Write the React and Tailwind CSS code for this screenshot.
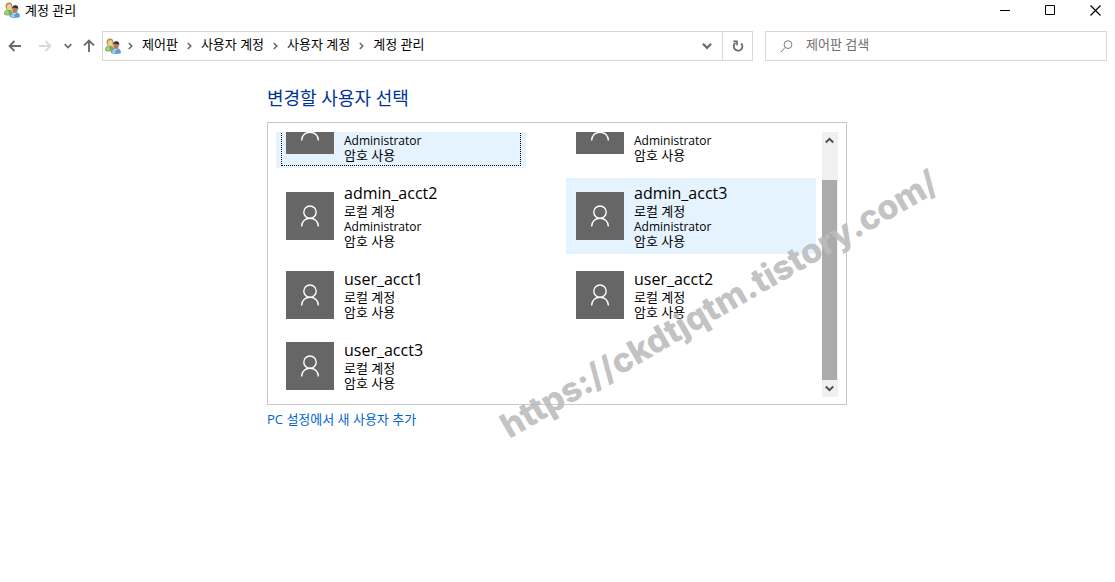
import { Fragment } from "react";

const accounts = [
  { name: "admin", admin: true, selected: true, focused: true },
  { name: "admin_acct1", admin: true },
  { name: "admin_acct2", admin: true },
  { name: "admin_acct3", admin: true, selected: true },
  { name: "user_acct1" },
  { name: "user_acct2" },
  { name: "user_acct3" },
];

const crumbs = ["제어판", "사용자 계정", "사용자 계정", "계정 관리"];

function UsersIcon() {
  return (
    <svg width="16" height="16" viewBox="0 0 16 16" className="shrink-0" aria-hidden="true">
      <path d="M0 12.5C0 9 1.6 7.4 4.6 7.2 7.5 7.4 9 9 9 12.8 6 13.8 2 13.6 0 12.5Z" fill="#7fae4c" />
      <path d="M1 11.8C1.2 9.6 2.2 8.4 4 8.2L5 12.6C3.4 12.8 2 12.5 1 11.8Z" fill="#a9cf7b" />
      <path d="M1.6 4.4C1.4 1.8 3 .5 5 .5S8.6 2 8.2 4.8L7.4 7.4H2.6Z" fill="#a87d35" />
      <ellipse cx="5.2" cy="5" rx="2.4" ry="3" fill="#f3cf9f" />
      <path d="M2.2 4.4C2.4 1.8 4 .9 5.6 1.2 5.2 2.8 4 3.8 2.2 4.4Z" fill="#d9ad58" />
      <path d="M6 15C5.8 12 7.4 10.2 10.8 10.1 14.2 10.2 16 11.8 16 15 13 16.2 8.6 16.2 6 15Z" fill="#5f9bd6" />
      <path d="M7.2 14.4C7.2 12.4 8.2 11.2 9.8 11L10.8 15.2C9.4 15.4 8 15 7.2 14.4Z" fill="#a5cdf0" />
      <path d="M9.4 10.2 11 12.6 12.8 10.2Z" fill="#eef5fb" />
      <ellipse cx="11" cy="7.8" rx="2.7" ry="3.1" fill="#b97b4b" />
      <path d="M8 7.2C7.6 4.4 9.2 3.2 11.2 3.2S14.8 4.6 14.2 7.8L13.4 6.2C11.6 6.4 9.8 6 8.8 5.6Z" fill="#33302f" />
    </svg>
  );
}

function Arrow({ className }) {
  return (
    <svg width="14" height="12" viewBox="0 0 14 12" className={className} fill="none" stroke="currentColor" strokeWidth="1.9" aria-hidden="true">
      <path d="M13 6H1.8M6.4 1 1.6 6 6.4 11" />
    </svg>
  );
}

function Chevron({ className, size = 9 }) {
  return (
    <svg width={size} height={size} viewBox="0 0 9 9" className={className} fill="none" stroke="currentColor" strokeWidth="2" aria-hidden="true">
      <path d="M.8 2.5 4.5 6.2 8.2 2.5" />
    </svg>
  );
}

function CrumbChevron() {
  return (
    <svg width="5" height="8" viewBox="0 0 5 8" className="mt-0.5 shrink-0" fill="none" stroke="#6b6b6b" strokeWidth="1.6" aria-hidden="true">
      <path d="M.8 1 3.8 4 .8 7" />
    </svg>
  );
}

function TitleBar() {
  return (
    <header className="flex h-5 items-center justify-between pl-1 pr-[14px]">
      <div className="flex items-center gap-[5px]">
        <UsersIcon />
        <h1 className="leading-5">계정 관리</h1>
      </div>
      <div className="flex gap-[34px]">
        <button type="button" aria-label="최소화">
          <svg width="11" height="11" viewBox="0 0 11 11" stroke="#000" fill="none">
            <path d="M0 5.5H10" />
          </svg>
        </button>
        <button type="button" aria-label="최대화">
          <svg width="11" height="11" viewBox="0 0 11 11" stroke="#000" fill="none">
            <path d="M.5.5H9.5V9.5H.5Z" />
          </svg>
        </button>
        <button type="button" aria-label="닫기">
          <svg width="11" height="11" viewBox="0 0 11 11" stroke="#000" strokeWidth="1.2" fill="none">
            <path d="M.5.5 10.5 10.5M10.5.5.5 10.5" />
          </svg>
        </button>
      </div>
    </header>
  );
}

function AddressBar() {
  return (
    <div className="mt-[11px] flex h-[30px] items-center pl-2 pr-2">
      {/* History buttons */}
      <nav className="flex w-[94px] shrink-0 items-center text-[#6b6b6b]" aria-label="탐색">
        <button type="button" aria-label="뒤로">
          <Arrow />
        </button>
        <button type="button" aria-label="앞으로" className="ml-4 text-[#d9d9d9]">
          <Arrow className="rotate-180" />
        </button>
        <button type="button" aria-label="최근 위치" className="ml-3">
          <Chevron size={8} />
        </button>
        <button type="button" aria-label="위로" className="ml-2.5">
          <Arrow className="rotate-90" />
        </button>
      </nav>

      {/* Breadcrumbs */}
      <div className="flex h-full min-w-0 flex-1 border border-[#d9d9d9]">
        <div className="flex min-w-0 flex-1 items-center pl-0.5 pr-2.5">
          <UsersIcon />
          <div className="flex items-center gap-[9px] pb-0.5 pl-[7px] whitespace-nowrap">
            {crumbs.map((crumb, i) => (
              <Fragment key={i}>
                <CrumbChevron />
                <a href="#">{crumb}</a>
              </Fragment>
            ))}
          </div>
          <button type="button" aria-label="이전 위치" className="ml-auto text-[#6b6b6b]">
            <Chevron size={10} />
          </button>
        </div>
        <button type="button" aria-label="새로 고침" className="flex w-[30px] items-center justify-center border-l border-[#d9d9d9]">
          <svg width="12" height="12" viewBox="0 0 12 12" fill="none" stroke="#6b6b6b" strokeWidth="1.8">
            <path d="M9.2 3.4A4.3 4.3 0 1 1 3.4 3" />
            <path d="M1.4 1.4H5V5.2" strokeWidth="1.7" />
          </svg>
        </button>
      </div>

      {/* Search */}
      <label className="ml-3 flex h-full w-[342px] shrink-0 items-center gap-[13px] border border-[#d9d9d9] pl-[14px]">
        <svg width="13" height="13" viewBox="0 0 13 13" fill="none" stroke="#7a7a7a" aria-hidden="true">
          <circle cx="8" cy="4.6" r="3.9" />
          <path d="M5.2 7.4.5 12.4" />
        </svg>
        <input
          type="search"
          placeholder="제어판 검색"
          aria-label="제어판 검색"
          className="min-w-0 flex-1 bg-transparent pb-0.5 outline-none placeholder:text-[#6d6d6d]"
        />
      </label>
    </div>
  );
}

function Account({ account }) {
  return (
    <button
      type="button"
      className={`relative flex items-center gap-2.5 px-2.5 py-[5px] text-left ${account.selected ? "bg-[#e5f3ff]" : ""}`}
    >
      <svg width="48" height="48" viewBox="0 0 48 48" className="shrink-0 bg-[#666]" fill="none" stroke="#fff" strokeWidth="1.4" aria-hidden="true">
        <circle cx="24" cy="20.2" r="6.2" />
        <path d="M15.6 34.6C15.6 29.6 19.3 26.3 24 26.3S32.4 29.6 32.4 34.6" />
      </svg>
      <span className="flex flex-col leading-[15px]">
        <span className="text-base leading-[21px]">{account.name}</span>
        <span>로컬 계정</span>
        {account.admin && <span className="text-xs leading-[15px]">Administrator</span>}
        <span>암호 사용</span>
      </span>
      {account.focused && (
        <span className="absolute inset-x-[5px] inset-y-[2px] border border-dotted border-black" />
      )}
    </button>
  );
}

function ScrollBar() {
  return (
    <div className="flex w-4 shrink-0 flex-col bg-[#f0f0f0] text-[#505050]">
      <button type="button" aria-label="위로 스크롤" className="flex h-[17px] items-center justify-center pr-px">
        <Chevron size={9} className="rotate-180" />
      </button>
      <div className="mr-px mt-auto h-[200px] bg-[#ababab]" />
      <button type="button" aria-label="아래로 스크롤" className="flex h-[17px] items-center justify-center pr-px">
        <Chevron size={9} />
      </button>
    </div>
  );
}

export default function App() {
  return (
    <div className="min-h-screen overflow-hidden bg-white font-['Open_Sans','Noto_Sans_CJK_KR',sans-serif] text-[13px] text-black">
      <TitleBar />
      <AddressBar />

      <div className="flex justify-center pr-px">
        <main className="mt-[25px] w-full max-w-[580px]">
          <h2 className="text-lg leading-6 text-[#003399]">변경할 사용자 선택</h2>

          <div className="relative mt-3">
            <section className="flex justify-between border border-[#c8c8c8] px-2 pb-[7px] pt-[9px]">
              {/* List is scrolled to its end, so the first row is cut off */}
              <div className="flex h-[265px] flex-col justify-end overflow-hidden pb-px">
                <div className="grid grid-cols-[250px_250px] gap-x-10 gap-y-2.5">
                  {accounts.map((account) => (
                    <Account key={account.name} account={account} />
                  ))}
                </div>
              </div>
              <ScrollBar />
            </section>

            <div className="pointer-events-none absolute left-[452px] top-[182px] -translate-x-1/2 -translate-y-1/2 -rotate-30 whitespace-nowrap font-['Inter',sans-serif] text-[34px] font-extrabold leading-10 text-[#bbb]/90">
              https://ckdtjqtm.tistory.com/
            </div>
          </div>

          <a href="#" className="mt-1 inline-block leading-5 text-[#0066cc]">
            PC 설정에서 새 사용자 추가
          </a>
        </main>
      </div>
    </div>
  );
}
